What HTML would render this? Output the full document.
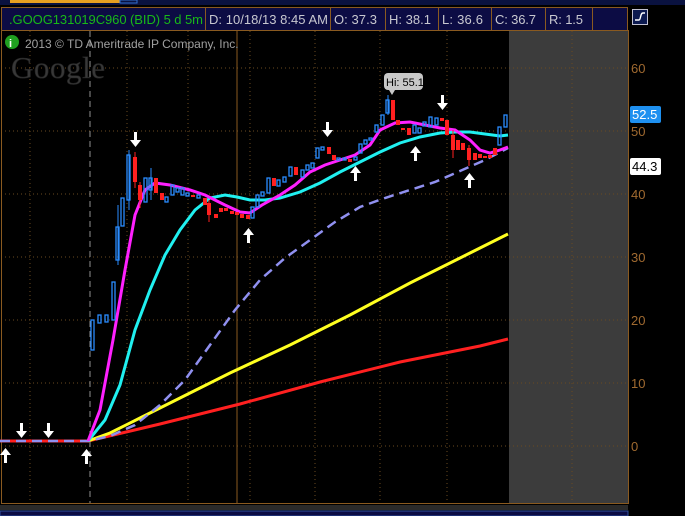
<!DOCTYPE html>
<html><head><meta charset="utf-8"><style>
html,body{margin:0;padding:0;background:#000;width:685px;height:516px;overflow:hidden;font-family:"Liberation Sans",sans-serif}
</style></head><body>
<svg width="685" height="516" xmlns="http://www.w3.org/2000/svg" style="position:absolute;left:0;top:0">
<rect x="0" y="0" width="685" height="516" fill="#000"/>
<rect x="0" y="0" width="685" height="5" fill="#0a1240"/>
<rect x="10" y="0" width="110" height="3" fill="#e8a020"/>
<rect x="120" y="0" width="17" height="3" fill="#0a1240" stroke="#3070d0" stroke-width="1"/>
<rect x="1.5" y="7.5" width="626" height="23" fill="#0c0c44" stroke="#8a5a20"/>
<g stroke="#8a5a20"><line x1="205.5" y1="8" x2="205.5" y2="30"/><line x1="330.5" y1="8" x2="330.5" y2="30"/><line x1="385.5" y1="8" x2="385.5" y2="30"/><line x1="438.5" y1="8" x2="438.5" y2="30"/><line x1="491.5" y1="8" x2="491.5" y2="30"/><line x1="545.5" y1="8" x2="545.5" y2="30"/><line x1="592.5" y1="8" x2="592.5" y2="30"/></g>
<g font-size="13">
<text x="9" y="24" fill="#18b818" textLength="194">.GOOG131019C960 (BID) 5 d 5m</text>
<text x="209" y="24" fill="#c8c8d0" textLength="119">D: 10/18/13 8:45 AM</text>
<text x="334" y="24" fill="#c8c8d0" textLength="43">O: 37.3</text>
<text x="389" y="24" fill="#c8c8d0" textLength="42">H: 38.1</text>
<text x="442" y="24" fill="#c8c8d0" textLength="41">L: 36.6</text>
<text x="495" y="24" fill="#c8c8d0" textLength="41">C: 36.7</text>
<text x="549" y="24" fill="#c8c8d0" textLength="34">R: 1.5</text>
</g>
<rect x="632.5" y="9.5" width="15" height="15" fill="#0c1a50" stroke="#c0c0d0"/>
<path d="M635 20 L639 20 C641 20 640 13 643 13 L645 13" stroke="#fff" stroke-width="1.4" fill="none"/>
<rect x="509" y="31" width="119" height="472" fill="#3c3c3c"/>
<g stroke="#6a4a20" stroke-dasharray="1,3">
<line x1="1" y1="68" x2="628" y2="68"/><line x1="1" y1="131" x2="628" y2="131"/><line x1="1" y1="194" x2="628" y2="194"/><line x1="1" y1="257" x2="628" y2="257"/><line x1="1" y1="320" x2="628" y2="320"/><line x1="1" y1="383" x2="628" y2="383"/><line x1="1" y1="446" x2="628" y2="446"/>
<line x1="30" y1="31" x2="30" y2="503"/><line x1="127" y1="31" x2="127" y2="503"/><line x1="188" y1="31" x2="188" y2="503"/><line x1="250" y1="31" x2="250" y2="503"/><line x1="315" y1="31" x2="315" y2="503"/><line x1="380" y1="31" x2="380" y2="503"/><line x1="447" y1="31" x2="447" y2="503"/><line x1="572" y1="31" x2="572" y2="503"/>
</g>
<line x1="237" y1="31" x2="237" y2="503" stroke="#8a5a20"/>
<line x1="90" y1="31" x2="90" y2="503" stroke="#909090" stroke-dasharray="6,4"/>
<rect x="1.5" y="30.5" width="627" height="473" fill="none" stroke="#8a5a20"/>
<rect x="0" y="505" width="628" height="5" fill="#2a2a2a"/>
<rect x="0" y="511" width="628" height="5" fill="#0c0c44" stroke="#3050a0"/>
<circle cx="12" cy="42" r="7" fill="#20a020"/><text x="9" y="47" font-size="11" fill="#fff" font-weight="bold">i</text>
<text x="25" y="48" font-size="12" fill="#a0a0a0">2013 © TD Ameritrade IP Company, Inc.</text>
<text x="11" y="78" font-size="31" fill="#383838" stroke="#222" stroke-width="0.6" font-family="Liberation Serif,serif" textLength="94">Google</text>
<g font-size="13" fill="#a06a30">
<text x="631" y="73">60</text><text x="631" y="136">50</text><text x="631" y="199">40</text><text x="631" y="262">30</text><text x="631" y="325">20</text><text x="631" y="388">10</text><text x="631" y="451">0</text></g>
<rect x="630" y="106" width="31" height="17" rx="2" fill="#1e90f0"/><text x="632" y="119" font-size="13" fill="#fff">52.5</text>
<rect x="630" y="158" width="31" height="17" rx="2" fill="#fff"/><text x="632" y="171" font-size="13" fill="#000">44.3</text>
<polyline fill="none" stroke="#ff2020" stroke-width="3" points="0,441 88,441 160,424 240,404 320,382 400,362 480,346 508,339"/>
<polyline fill="none" stroke="#ffff20" stroke-width="3" points="88,441 110,433 140,418 170,403 200,388 230,373 260,359 290,345 320,330 350,315 380,299 410,283 440,268 470,253 508,234"/>
<polyline fill="none" stroke="#9090f0" stroke-width="2.5" stroke-dasharray="10,6" points="0,441 88,441 110,436 135,425 160,405 185,380 210,345 235,310 260,280 285,258 310,240 335,222 360,207 385,198 410,190 435,182 460,171 485,160 508,148"/>
<polyline fill="none" stroke="#20f0f0" stroke-width="3" points="88,441 105,420 120,385 135,330 150,290 165,255 180,230 195,210 210,198 225,195 237,197 250,200 265,200 280,198 300,192 320,183 340,172 360,162 380,152 400,143 420,137 440,133 455,132 470,132 485,134 500,136 508,135"/>
<polyline fill="none" stroke="#ff20ff" stroke-width="3" points="88,441 100,410 113,340 125,270 135,215 145,190 155,183 170,185 190,190 205,195 225,205 240,212 250,213 262,205 280,195 295,185 310,172 325,165 340,160 355,155 370,145 380,130 395,123 410,122 425,125 440,128 455,130 470,140 480,150 490,153 500,150 508,147"/>
<g fill="none" stroke="#2a8cff" stroke-width="1.3">
<rect x="91" y="320" width="3" height="30"/><rect x="98" y="315" width="3" height="8"/><rect x="105" y="315" width="3" height="7"/><rect x="112" y="282" width="3" height="38"/><rect x="116" y="227" width="3" height="33"/><rect x="121" y="198" width="3" height="28"/><rect x="127" y="155" width="3" height="45"/><rect x="144" y="178" width="3" height="24"/><rect x="149" y="178" width="3" height="12"/><rect x="165" y="197" width="3" height="5"/><rect x="171" y="185" width="3" height="10"/><rect x="176" y="188" width="3" height="4"/><rect x="181" y="188" width="3" height="7"/><rect x="186" y="193" width="3" height="3"/><rect x="197" y="195" width="3" height="3"/><rect x="251" y="207" width="3" height="11"/><rect x="256" y="195" width="3" height="12"/><rect x="261" y="192" width="3" height="4"/><rect x="267" y="178" width="3" height="15"/><rect x="277" y="180" width="3" height="6"/><rect x="283" y="177" width="3" height="5"/><rect x="289" y="167" width="3" height="9"/><rect x="301" y="170" width="3" height="7"/><rect x="306" y="165" width="3" height="5"/><rect x="311" y="163" width="3" height="5"/><rect x="316" y="148" width="3" height="10"/><rect x="321" y="147" width="3" height="3"/><rect x="337" y="158" width="3" height="2"/><rect x="343" y="158" width="3" height="2"/><rect x="354" y="157" width="3" height="3"/><rect x="359" y="144" width="3" height="9"/><rect x="364" y="140" width="3" height="4"/><rect x="369" y="138" width="3" height="2"/><rect x="375" y="125" width="3" height="7"/><rect x="381" y="115" width="3" height="10"/><rect x="386" y="100" width="3" height="13"/><rect x="413" y="125" width="3" height="8"/><rect x="418" y="128" width="3" height="5"/><rect x="423" y="122" width="3" height="4"/><rect x="429" y="117" width="3" height="10"/><rect x="435" y="118" width="3" height="7"/><rect x="498" y="127" width="3" height="18"/><rect x="504" y="115" width="3" height="12"/>
</g>
<g stroke="#2a8cff" stroke-width="1"><line x1="129" y1="150" x2="129" y2="210"/><line x1="118" y1="205" x2="118" y2="265"/><line x1="151" y1="168" x2="151" y2="200"/><line x1="388" y1="95" x2="388" y2="115"/></g>
<g stroke="#ff2020" stroke-width="1"><line x1="135" y1="152" x2="135" y2="188"/><line x1="140" y1="182" x2="140" y2="208"/><line x1="209" y1="200" x2="209" y2="222"/><line x1="453" y1="130" x2="453" y2="158"/><line x1="469" y1="145" x2="469" y2="166"/></g>
<g fill="#ff2020">
<rect x="133" y="157" width="4" height="25"/><rect x="138" y="185" width="4" height="15"/><rect x="154" y="178" width="4" height="15"/><rect x="160" y="193" width="4" height="7"/><rect x="191" y="195" width="4" height="2"/><rect x="203" y="198" width="4" height="7"/><rect x="207" y="203" width="4" height="12"/><rect x="214" y="214" width="4" height="4"/><rect x="219" y="208" width="4" height="4"/><rect x="224" y="208" width="4" height="3"/><rect x="230" y="211" width="4" height="3"/><rect x="235" y="212" width="4" height="3"/><rect x="240" y="214" width="4" height="4"/><rect x="246" y="215" width="4" height="4"/><rect x="272" y="178" width="4" height="8"/><rect x="294" y="167" width="4" height="8"/><rect x="327" y="147" width="4" height="7"/><rect x="332" y="155" width="4" height="5"/><rect x="348" y="159" width="4" height="3"/><rect x="391" y="100" width="4" height="20"/><rect x="396" y="120" width="4" height="5"/><rect x="401" y="128" width="4" height="2"/><rect x="407" y="128" width="4" height="7"/><rect x="440" y="118" width="4" height="3"/><rect x="445" y="120" width="4" height="15"/><rect x="451" y="135" width="4" height="15"/><rect x="456" y="140" width="4" height="10"/><rect x="461" y="143" width="4" height="7"/><rect x="467" y="148" width="4" height="12"/><rect x="473" y="153" width="4" height="7"/><rect x="478" y="154" width="4" height="4"/><rect x="483" y="156" width="4" height="2"/><rect x="488" y="155" width="4" height="3"/><rect x="493" y="148" width="4" height="7"/>
</g>
<g fill="#fff">
<path d="M20 423h3v8h4l-5.5 7-5.5-7h4z"/><path d="M47 423h3v8h4l-5.5 7-5.5-7h4z"/><path d="M134 132h3v8h4l-5.5 7-5.5-7h4z"/><path d="M326 122h3v8h4l-5.5 7-5.5-7h4z"/><path d="M441 95h3v8h4l-5.5 7-5.5-7h4z"/>
<path d="M4 463h3v-8h4l-5.5-7-5.5 7h4z"/><path d="M85 464h3v-8h4l-5.5-7-5.5 7h4z"/><path d="M247 243h3v-8h4l-5.5-7-5.5 7h4z"/><path d="M354 181h3v-8h4l-5.5-7-5.5 7h4z"/><path d="M414 161h3v-8h4l-5.5-7-5.5 7h4z"/><path d="M468 188h3v-8h4l-5.5-7-5.5 7h4z"/>
</g>
<rect x="384" y="73" width="39" height="17" rx="4" fill="#c8c8c8"/>
<path d="M389 90 L392 95 L395 90z" fill="#c8c8c8"/>
<text x="386" y="86" font-size="11" fill="#000">Hi: 55.1</text>
</svg>
</body></html>
